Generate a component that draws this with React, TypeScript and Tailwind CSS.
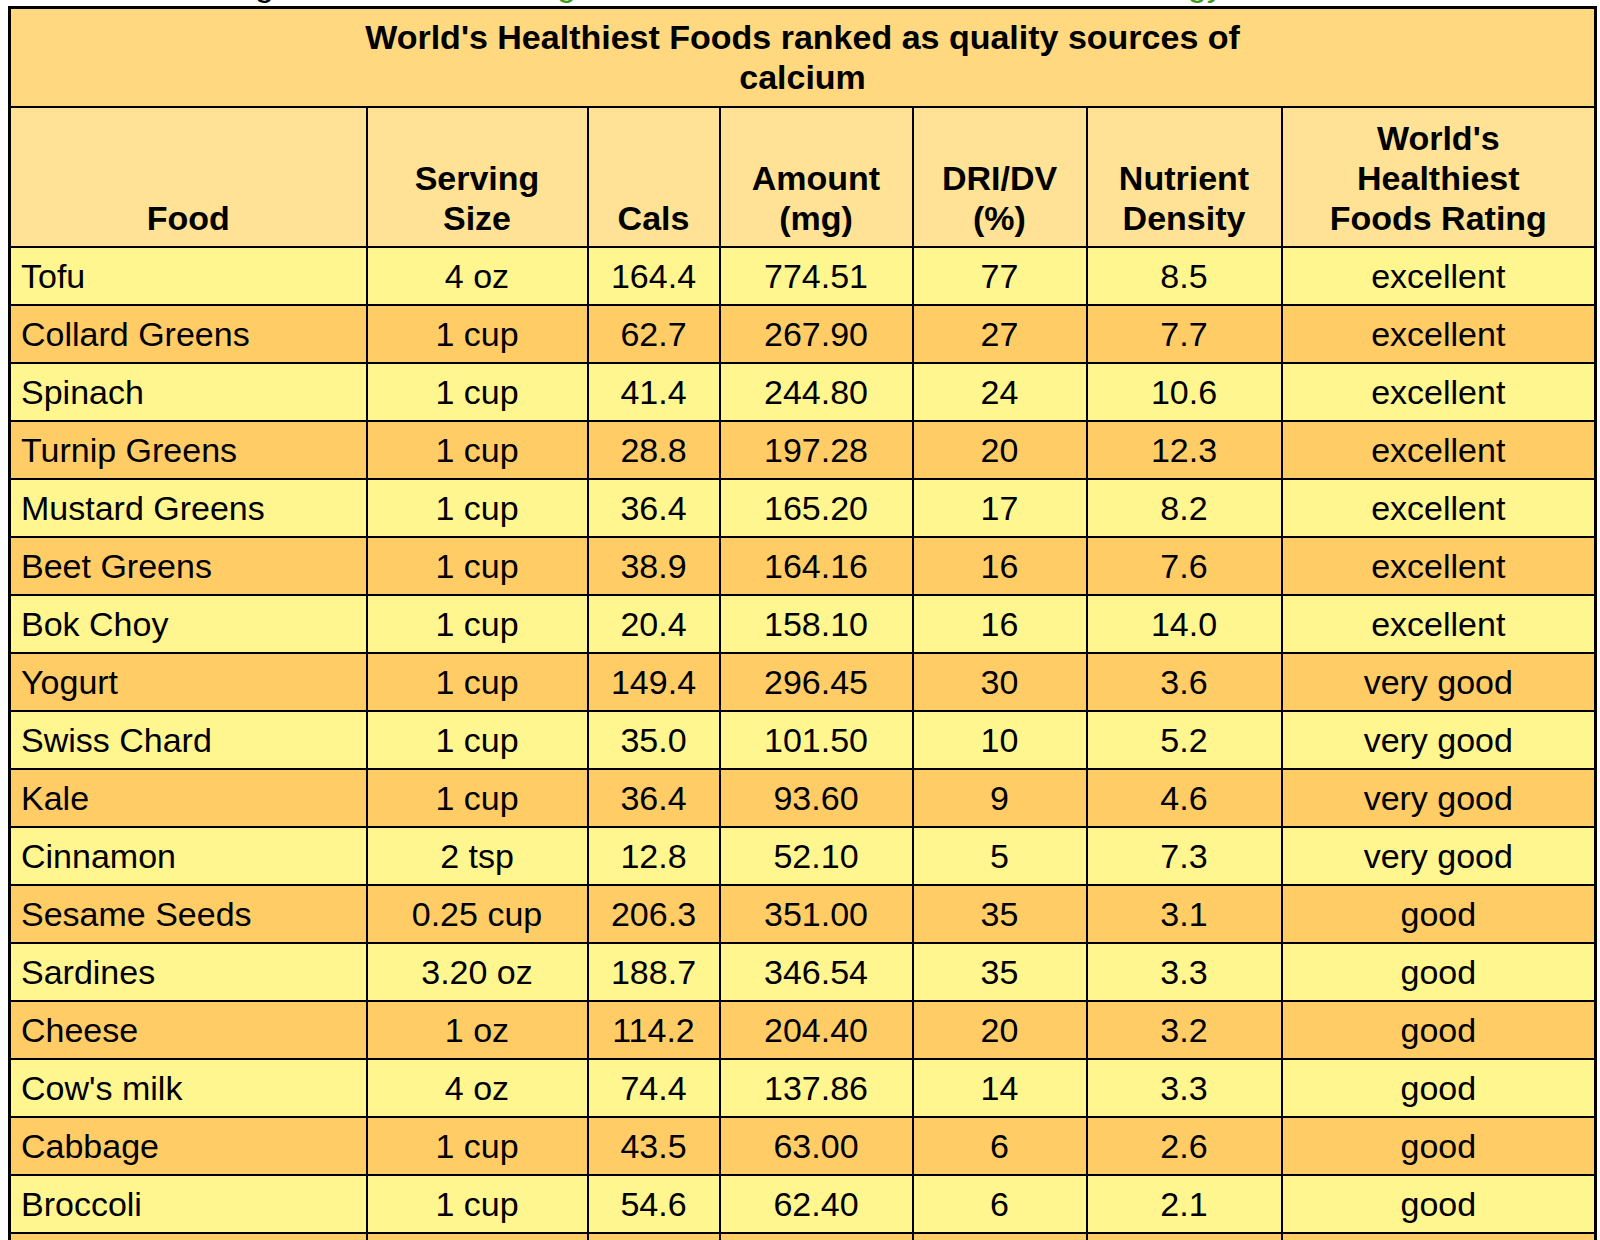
const rows: [string, string, string, string, string, string, string][] = [
  ['Tofu', '4 oz', '164.4', '774.51', '77', '8.5', 'excellent'],
  ['Collard Greens', '1 cup', '62.7', '267.90', '27', '7.7', 'excellent'],
  ['Spinach', '1 cup', '41.4', '244.80', '24', '10.6', 'excellent'],
  ['Turnip Greens', '1 cup', '28.8', '197.28', '20', '12.3', 'excellent'],
  ['Mustard Greens', '1 cup', '36.4', '165.20', '17', '8.2', 'excellent'],
  ['Beet Greens', '1 cup', '38.9', '164.16', '16', '7.6', 'excellent'],
  ['Bok Choy', '1 cup', '20.4', '158.10', '16', '14.0', 'excellent'],
  ['Yogurt', '1 cup', '149.4', '296.45', '30', '3.6', 'very good'],
  ['Swiss Chard', '1 cup', '35.0', '101.50', '10', '5.2', 'very good'],
  ['Kale', '1 cup', '36.4', '93.60', '9', '4.6', 'very good'],
  ['Cinnamon', '2 tsp', '12.8', '52.10', '5', '7.3', 'very good'],
  ['Sesame Seeds', '0.25 cup', '206.3', '351.00', '35', '3.1', 'good'],
  ['Sardines', '3.20 oz', '188.7', '346.54', '35', '3.3', 'good'],
  ['Cheese', '1 oz', '114.2', '204.40', '20', '3.2', 'good'],
  ["Cow's milk", '4 oz', '74.4', '137.86', '14', '3.3', 'good'],
  ['Cabbage', '1 cup', '43.5', '63.00', '6', '2.6', 'good'],
  ['Broccoli', '1 cup', '54.6', '62.40', '6', '2.1', 'good'],
  ['Green Beans', '1 cup', '43.8', '57.50', '6', '2.4', 'good'],
]

const widths = ['w-[357px]', 'w-[221px]', 'w-[132px]', 'w-[193px]', 'w-[174px]', 'w-[195px]', 'w-[314px]']

const headers = ['Food', 'Serving Size', 'Cals', 'Amount (mg)', 'DRI/DV (%)', 'Nutrient Density']

export default function App() {
  return (
    <div
      className="w-[1600px] h-[1240px] overflow-hidden bg-white text-black"
      style={{ fontFamily: '"Liberation Sans", Arial, sans-serif' }}
    >
      {/* remnant of the paragraph above, clipped */}
      <div className="h-[6px] overflow-hidden">
        <p className="-mt-[36px] text-[34px] leading-[40px] whitespace-nowrap">
          <span className="ml-[255px]">g</span>
          <span className="ml-[283px] text-[#3f9a1d]">g</span>
          <span className="ml-[612px] text-[#3f9a1d]">gy</span>
        </p>
      </div>

      <table className="ml-[8px] w-[1586px] table-fixed border-collapse border-[3px] border-black text-[34px] leading-[40px]">
        <colgroup>
          {widths.map((w, i) => (
            <col key={i} className={w} />
          ))}
        </colgroup>
        <thead>
          <tr className="bg-[#ffd880]">
            <th colSpan={7} className="border-2 border-black pt-2 pb-[9px] font-bold">
              <div className="max-w-[940px] mx-auto">
                World's Healthiest Foods ranked as quality sources of calcium
              </div>
            </th>
          </tr>
          <tr className="bg-[#ffe296]">
            {headers.map((h, i) => (
              <th key={i} className="border-2 border-black px-3 pt-[10px] pb-2 align-bottom font-bold text-center">
                {h}
              </th>
            ))}
            <th className="border-2 border-black px-3 pt-[10px] pb-2 align-bottom font-bold text-center">
              World's
              <br />
              Healthiest
              <br />
              Foods Rating
            </th>
          </tr>
        </thead>
        <tbody>
          {rows.map((r, i) => (
            <tr key={i} className={i % 2 === 0 ? 'bg-[#fff690]' : 'bg-[#ffcc66]'}>
              {r.map((c, j) => (
                <td
                  key={j}
                  className={`border-2 border-black py-2 whitespace-nowrap ${
                    j === 0 ? 'text-left pl-[10px]' : 'text-center'
                  }`}
                >
                  {c}
                </td>
              ))}
            </tr>
          ))}
        </tbody>
      </table>
    </div>
  )
}
